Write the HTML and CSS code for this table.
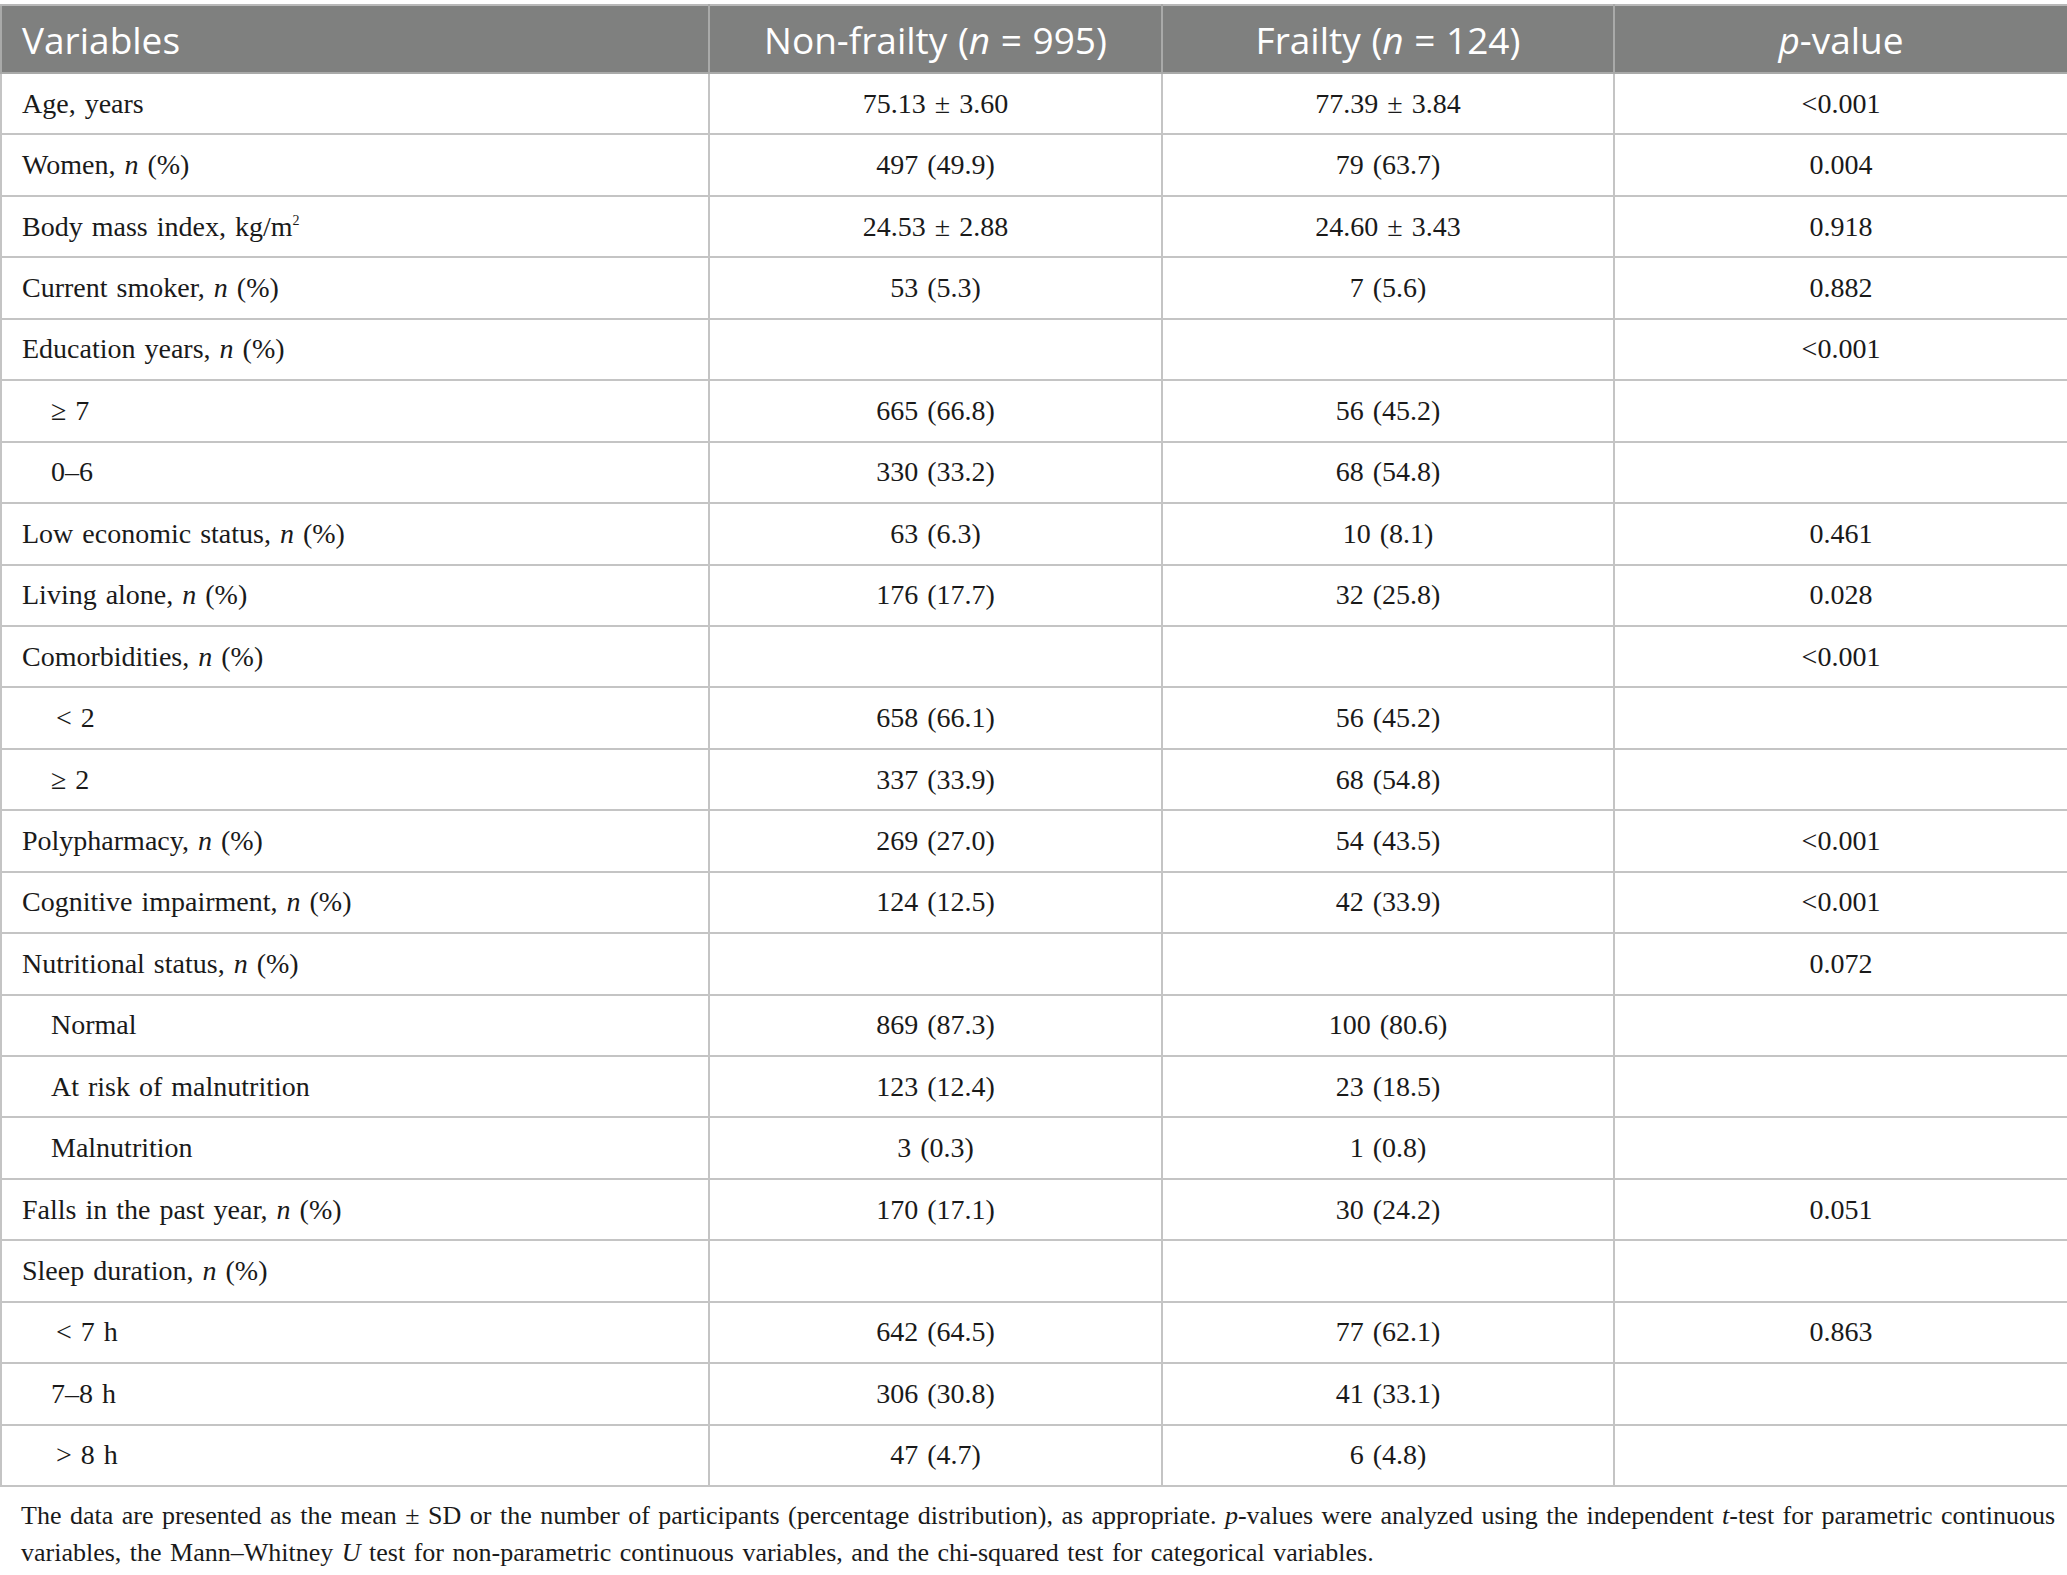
FILE: index.html
```html
<!DOCTYPE html>
<html lang="en">
<head>
<meta charset="utf-8">
<title>Table</title>
<link rel="stylesheet" href="styles.css">
</head>
<body>
<div class="page">
<table class="data">
  <colgroup>
    <col class="c1"><col class="c2"><col class="c3"><col class="c4">
  </colgroup>
  <thead>
    <tr>
      <th class="left">Variables</th>
      <th>Non-frailty (<i>n</i> = 995)</th>
      <th>Frailty (<i>n</i> = 124)</th>
      <th><i>p</i>-value</th>
    </tr>
  </thead>
  <tbody>
    <tr><td class="left">Age, years</td><td>75.13 ± 3.60</td><td>77.39 ± 3.84</td><td>&lt;0.001</td></tr>
    <tr><td class="left">Women, <i>n</i> (%)</td><td>497 (49.9)</td><td>79 (63.7)</td><td>0.004</td></tr>
    <tr><td class="left">Body mass index, kg/m<sup>2</sup></td><td>24.53 ± 2.88</td><td>24.60 ± 3.43</td><td>0.918</td></tr>
    <tr><td class="left">Current smoker, <i>n</i> (%)</td><td>53 (5.3)</td><td>7 (5.6)</td><td>0.882</td></tr>
    <tr><td class="left">Education years, <i>n</i> (%)</td><td></td><td></td><td>&lt;0.001</td></tr>
    <tr><td class="left sub">≥ 7</td><td>665 (66.8)</td><td>56 (45.2)</td><td></td></tr>
    <tr><td class="left sub">0–6</td><td>330 (33.2)</td><td>68 (54.8)</td><td></td></tr>
    <tr><td class="left">Low economic status, <i>n</i> (%)</td><td>63 (6.3)</td><td>10 (8.1)</td><td>0.461</td></tr>
    <tr><td class="left">Living alone, <i>n</i> (%)</td><td>176 (17.7)</td><td>32 (25.8)</td><td>0.028</td></tr>
    <tr><td class="left">Comorbidities, <i>n</i> (%)</td><td></td><td></td><td>&lt;0.001</td></tr>
    <tr><td class="left sub sub2">&lt; 2</td><td>658 (66.1)</td><td>56 (45.2)</td><td></td></tr>
    <tr><td class="left sub">≥ 2</td><td>337 (33.9)</td><td>68 (54.8)</td><td></td></tr>
    <tr><td class="left">Polypharmacy, <i>n</i> (%)</td><td>269 (27.0)</td><td>54 (43.5)</td><td>&lt;0.001</td></tr>
    <tr><td class="left">Cognitive impairment, <i>n</i> (%)</td><td>124 (12.5)</td><td>42 (33.9)</td><td>&lt;0.001</td></tr>
    <tr><td class="left">Nutritional status, <i>n</i> (%)</td><td></td><td></td><td>0.072</td></tr>
    <tr><td class="left sub">Normal</td><td>869 (87.3)</td><td>100 (80.6)</td><td></td></tr>
    <tr><td class="left sub">At risk of malnutrition</td><td>123 (12.4)</td><td>23 (18.5)</td><td></td></tr>
    <tr><td class="left sub">Malnutrition</td><td>3 (0.3)</td><td>1 (0.8)</td><td></td></tr>
    <tr><td class="left">Falls in the past year, <i>n</i> (%)</td><td>170 (17.1)</td><td>30 (24.2)</td><td>0.051</td></tr>
    <tr><td class="left">Sleep duration, <i>n</i> (%)</td><td></td><td></td><td></td></tr>
    <tr><td class="left sub sub2">&lt; 7 h</td><td>642 (64.5)</td><td>77 (62.1)</td><td>0.863</td></tr>
    <tr><td class="left sub">7–8 h</td><td>306 (30.8)</td><td>41 (33.1)</td><td></td></tr>
    <tr><td class="left sub sub2">&gt; 8 h</td><td>47 (4.7)</td><td>6 (4.8)</td><td></td></tr>
  </tbody>
</table>
<p class="note">The data are presented as the mean ± SD or the number of participants (percentage distribution), as appropriate. <i>p</i>-values were analyzed using the independent <i>t</i>-test for parametric continuous<br>variables, the Mann–Whitney <i>U</i> test for non-parametric continuous variables, and the chi-squared test for categorical variables.</p>
</div>
</body>
</html>
```
FILE: styles.css
```css
html, body {
  margin: 0;
  padding: 0;
  background: #ffffff;
}

.page {
  padding-top: 4px;
  width: 2067px;
}

.data {
  border-collapse: collapse;
  width: 2067px;
  table-layout: fixed;
  font-family: "Liberation Serif", "Times New Roman", serif;
  font-size: 28px;
  word-spacing: 2px;
  color: #1a1a1a;
}

.c1 { width: 708px; }
.c2 { width: 453px; }
.c3 { width: 452px; }
.c4 { width: 454px; }

.data th {
  background: #7f807f;
  color: #ffffff;
  font-family: "Open Sans", "Noto Sans", sans-serif;
  font-weight: 400;
  font-size: 37px;
  word-spacing: 1px;
  height: 66px;
  padding: 0 20px;
  text-align: center;
  border: 2px solid #a9aaa9;
  border-top-color: #b8b8b8;
  vertical-align: middle;
}

.data td {
  height: 59.45px;
  padding: 0 20px;
  text-align: center;
  vertical-align: middle;
  border: 2px solid #c4c4c4;
  white-space: nowrap;
}

.data th.left,
.data td.left {
  text-align: left;
}

.data td.sub {
  padding-left: 49px;
}

.data td.sub2 {
  padding-left: 54px;
}

.data sup {
  font-size: 14px;
  vertical-align: 11px;
  line-height: 0;
}

.note {
  margin: 10px 0 0 0;
  padding-left: 21px;
  font-family: "Liberation Serif", "Times New Roman", serif;
  font-size: 26px;
  word-spacing: 2px;
  line-height: 37px;
  color: #1a1a1a;
  white-space: nowrap;
}
```
